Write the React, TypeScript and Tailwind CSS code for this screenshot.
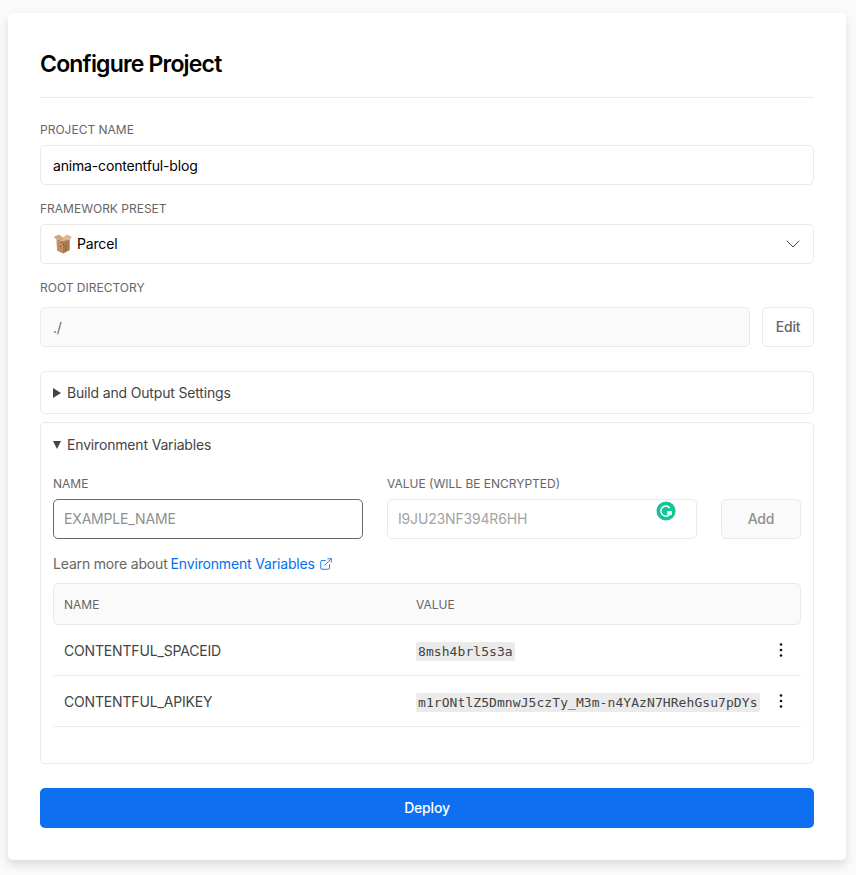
import { ChevronDown, ExternalLink } from "lucide-react";

const LABEL = "block text-xs leading-4 uppercase text-[#666666]";
const FIELD = "flex h-10 items-center rounded-[5px] border text-sm tracking-[-0.012em]";

const ENV_ROWS = [
  { name: "CONTENTFUL_SPACEID", value: "8msh4brl5s3a" },
  { name: "CONTENTFUL_APIKEY", value: "m1rONtlZ5DmnwJ5czTy_M3m-n4YAzN7HRehGsu7pDYs" },
];

function ParcelIcon() {
  return (
    <svg width="20" height="20" viewBox="0 0 20 20" className="shrink-0">
      <path d="M3.500 5 L10 7 L16.500 5 L16.500 16 L10 19.500 L4 16.500 Z" fill="#c08e5e" />
      <path d="M10 7 L16.500 5 L16.500 16 L10 19.500 Z" fill="#a97a4e" />
      <path d="M0.500 3 L6 0.500 L10 3.500 L10 7 L3.500 5.500 Z" fill="#d3a878" />
      <path d="M10 3.500 L14 0.500 L19 3 L16 6 L10 7 Z" fill="#dcb88c" />
      <path d="M8 8 h1 v1 h-1z M10 10 h1 v1 h-1z M12 12 h1 v1 h-1z M12 15 h1 v1 h-1z M7 12 h1 v1 h-1z" fill="#5e4630" />
    </svg>
  );
}

function GrammarlyIcon() {
  return (
    <svg width="20" height="20" viewBox="0 0 20 20" className="absolute right-[21px] top-[2px]">
      <circle cx="10" cy="10" r="9.500" fill="#15c39a" />
      <path d="M13.800 7 A5 5 0 1 0 14.800 11 H11" fill="none" stroke="#fff" strokeWidth="1.500" />
      <path d="M11.200 13 L14.800 10.700 L15.500 14" fill="none" stroke="#fff" strokeWidth="1.200" />
    </svg>
  );
}

function Kebab() {
  return (
    <svg width="16" height="16" viewBox="0 0 16 16" className="shrink-0">
      <circle cx="8" cy="2.500" r="1.300" fill="#111" />
      <circle cx="8" cy="8" r="1.300" fill="#111" />
      <circle cx="8" cy="13.500" r="1.300" fill="#111" />
    </svg>
  );
}

export default function App() {
  return (
    <div className="min-h-[875px] bg-[#fafafa] pl-2 pr-[10px] pt-[13px] font-['Inter',sans-serif]">
      <div className="h-[847px] rounded-[5px] bg-white px-8 shadow-[0_5px_10px_rgba(0,0,0,0.12)]">
        <div className="flex h-[85px] items-center border-b border-[#eaeaea] pt-[18px]">
          <h1 className="text-[23px] font-semibold leading-8 tracking-[-0.035em] text-black">Configure Project</h1>
        </div>

        <label className={`${LABEL} mt-6`}>Project Name</label>
        <div className={`${FIELD} mt-[7px] border-[#eaeaea] bg-white px-3 pt-[2px] text-black`}>anima-contentful-blog</div>

        <label className={`${LABEL} mt-4`}>Framework Preset</label>
        <div className={`${FIELD} mt-[7px] justify-between border-[#eaeaea] bg-white px-3 text-black`}>
          <span className="flex items-center gap-1">
            <ParcelIcon />
            Parcel
          </span>
          <ChevronDown size={24} strokeWidth={1} className="-mr-1 text-[#444]" />
        </div>

        <label className={`${LABEL} mt-4`}>Root Directory</label>
        <div className="mt-[11px] flex gap-3">
          <div className={`${FIELD} flex-1 border-[#eaeaea] bg-[#fafafa] px-3 pt-[2px] text-[#666666]`}>./</div>
          <button type="button" className="h-10 w-[52px] rounded-[5px] border border-[#eaeaea] bg-white text-sm font-medium tracking-[-0.012em] text-[#666666]">
            Edit
          </button>
        </div>

        <div className="mt-6 flex h-[43px] items-center gap-[6px] rounded-[5px] border border-[#eaeaea] px-3 text-sm tracking-[-0.012em] text-[#444444]">
          <span className="h-0 w-0 border-y-[5px] border-l-[8px] border-y-transparent border-l-[#444]" />
          Build and Output Settings
        </div>

        <div className="mt-2 h-[342px] rounded-[5px] border border-[#eaeaea] px-3">
          <div className="flex h-[43px] items-center gap-[6px] text-sm tracking-[-0.012em] text-[#444444]">
            <span className="h-0 w-0 border-x-[4.500px] border-t-[8px] border-x-transparent border-t-[#444]" />
            Environment Variables
          </div>

          <div className="mt-[10px] flex">
            <div className="w-[310px]">
              <label className={LABEL}>Name</label>
              <div className={`${FIELD} mt-[7px] border-[#666666] bg-white px-[10px] text-[#8f8f8f]`}>EXAMPLE_NAME</div>
            </div>
            <div className="relative ml-6 w-[310px]">
              <label className={LABEL}>Value (will be encrypted)</label>
              <div className={`${FIELD} mt-[7px] border-[#eaeaea] bg-white px-[10px] text-[#a3a3a3]`}>I9JU23NF394R6HH</div>
              <div className="absolute inset-x-0 top-[23px]">
                <GrammarlyIcon />
              </div>
            </div>
            <button type="button" className="ml-6 mt-[23px] h-10 w-20 rounded-[5px] border border-[#eaeaea] bg-[#fafafa] text-sm font-medium tracking-[-0.012em] text-[#8f8f8f]">
              Add
            </button>
          </div>

          <p className="mt-4 flex items-center text-sm leading-[18px] tracking-[-0.012em] text-[#666666]">
            Learn more about
            <span className="ml-[3px] text-[#0070f3]">Environment Variables</span>
            <ExternalLink size={14} strokeWidth={1.5} className="ml-[4px] text-[#0070f3]" />
          </p>

          <div className="mt-[10px] flex h-[42px] items-center rounded-[5px] border border-[#eaeaea] bg-[#fafafa] px-[10px] pt-[2px] text-xs uppercase text-[#666666]">
            <span className="w-[352px]">Name</span>
            <span>Value</span>
          </div>

          {ENV_ROWS.map((row) => (
            <div key={row.name} className="flex h-[51px] items-center border-b border-[#eaeaea] pl-[11px] text-sm tracking-[-0.012em] text-[#444444]">
              <span className="mt-[2px] w-[352px]">{row.name}</span>
              <code className="mt-[2px] rounded-[2px] bg-[#ebebeb] px-[2px] font-['DejaVu_Sans_Mono',monospace] text-[13px] leading-[19px] tracking-[0.07px] text-[#444444]">
                {row.value}
              </code>
              <span className="ml-auto mr-[12px]">
                <Kebab />
              </span>
            </div>
          ))}
        </div>

        <button type="button" className="mt-6 h-10 w-full rounded-[5px] bg-[#0e70f1] text-sm font-medium tracking-[-0.012em] text-white">
          Deploy
        </button>
      </div>
    </div>
  );
}
